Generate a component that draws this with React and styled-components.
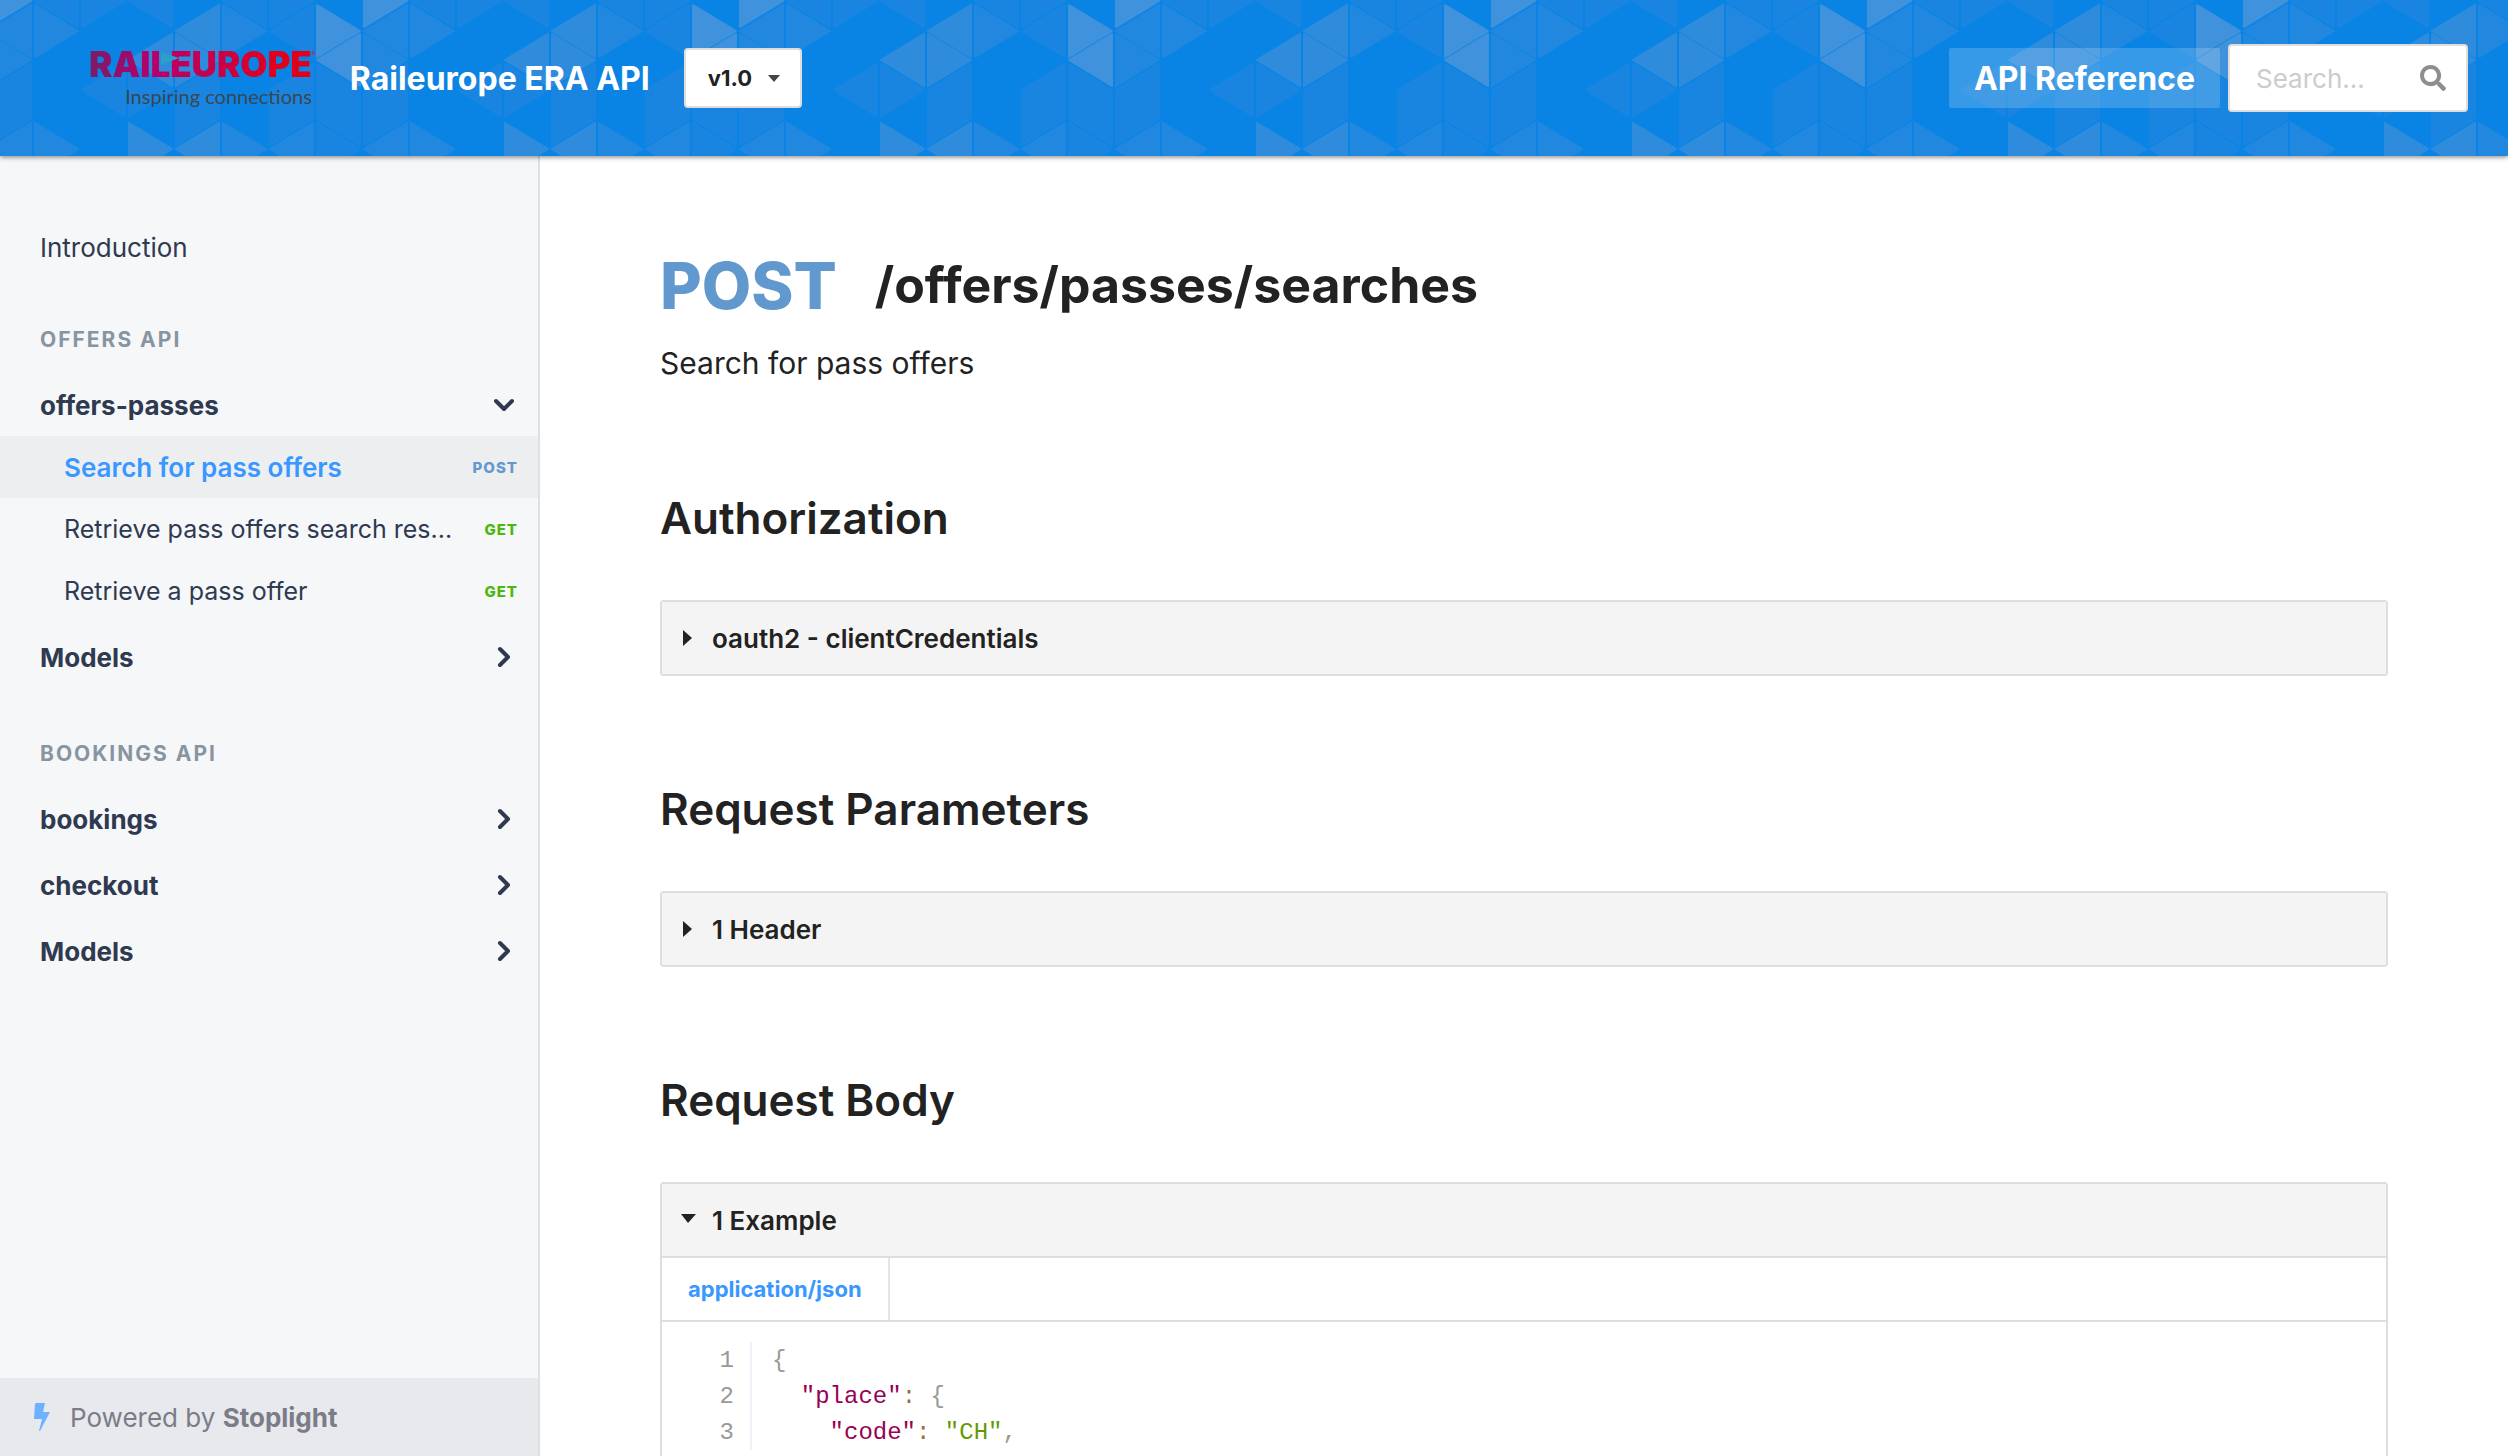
import React from "react";
import styled, { createGlobalStyle } from "styled-components";
import { FaSearch } from "react-icons/fa";

const Global = createGlobalStyle`
  *, *::before, *::after { box-sizing: border-box; }
  body { margin: 0; font-family: Inter, "Noto Sans", sans-serif; color: #222; background: #fff; }
  h1, h2, h3, p, ul, ol { margin: 0; padding: 0; }
  ul, ol { list-style: none; }
  a { color: inherit; text-decoration: none; }
  button, input, select { font-family: inherit; }
`;

const Page = styled.div`
  display: flex;
  flex-direction: column;
  height: 100vh;
  overflow: hidden;
`;

const Header = styled.header`
  position: relative;
  z-index: 1;
  display: flex;
  align-items: center;
  flex: none;
  height: 156px;
  padding: 0 40px 0 89px;
  background: #0a84e4;
  box-shadow: 0 1px 5px rgba(0, 0, 0, 0.5);
`;

const HeaderPattern = styled.svg`
  position: absolute;
  inset: 0;
  z-index: -1;
  width: 100%;
  height: 100%;
`;

const Logo = styled.a`
  position: relative;
  display: flex;
  flex-direction: column;
  align-items: flex-end;
`;

const LogoName = styled.span`
  font-size: 35px;
  line-height: 36px;
  font-weight: 900;
  color: transparent;
  background: linear-gradient(90deg, #7a1c68, #b5006b 28%, #c8004c 55%, #e2001a 85%);
  background-clip: text;
`;

const LogoArrow = styled.svg`
  position: absolute;
  top: 6px;
  left: 72px;
  width: 18px;
  height: 13px;
  fill: #2a9fc9;
`;

const LogoMark = styled.sup`
  position: absolute;
  top: 4px;
  left: 100%;
  font-size: 6px;
  line-height: 8px;
  color: #b02a4c;
`;

const LogoTagline = styled.span`
  font-family: Lato, sans-serif;
  font-size: 20px;
  line-height: 28px;
  color: #3c4650;
`;

const SiteTitle = styled.a`
  margin-left: 38px;
  font-size: 32px;
  font-weight: 700;
  color: #fff;
`;

const VersionPicker = styled.label`
  position: relative;
  margin-left: 34px;
`;

const VersionSelect = styled.select`
  appearance: none;
  display: block;
  width: 118px;
  height: 60px;
  padding: 0 22px;
  border: 2px solid #dedede;
  border-radius: 4px;
  background: #fff;
  color: #222;
  font-size: 22px;
  font-weight: 700;
`;

const VersionCaret = styled.svg`
  position: absolute;
  top: 27px;
  right: 22px;
  width: 12px;
  height: 7px;
  fill: #444;
`;

const HeaderNav = styled.nav`
  display: flex;
  align-items: center;
  gap: 8px;
  margin-left: auto;
`;

const HeaderLink = styled.a`
  display: flex;
  align-items: center;
  height: 60px;
  padding: 0 25px;
  border-radius: 2px;
  background: rgba(255, 255, 255, 0.18);
  color: #fff;
  font-size: 32px;
  font-weight: 700;
`;

const SearchBox = styled.label`
  display: flex;
  align-items: center;
  width: 240px;
  height: 68px;
  padding: 0 20px 0 26px;
  border: 2px solid #dedede;
  border-radius: 4px;
  background: #fff;
  color: #8e8e8e;
`;

const SearchInput = styled.input`
  flex: 1;
  min-width: 0;
  padding: 0;
  border: 0;
  outline: 0;
  background: none;
  font-size: 26px;
  &::placeholder { color: #ccc; opacity: 1; }
`;

const Body = styled.div`
  display: flex;
  flex: 1;
  min-height: 0;
`;

const Sidebar = styled.aside`
  display: flex;
  flex-direction: column;
  flex: none;
  width: 540px;
  border-right: 2px solid #dae1e7;
  background: #f6f7f9;
  color: #2f3a50;
  font-size: 26px;
`;

const SidebarNav = styled.nav`
  flex: 1;
  padding-top: 60px;
`;

const NavLink = styled.a`
  display: flex;
  align-items: center;
  height: 62px;
  padding: 0 40px;
`;

const NavHeading = styled.h3`
  padding: 46px 40px 14px;
  font-size: 21px;
  line-height: 32px;
  font-weight: 700;
  letter-spacing: 2px;
  color: #8795a1;
`;

const NavGroup = styled.ul`
  margin-bottom: 4px;
`;

const GroupToggle = styled.button`
  display: flex;
  align-items: center;
  justify-content: space-between;
  width: 100%;
  height: 62px;
  margin-top: 4px;
  padding: 0 23px 0 40px;
  border: 0;
  background: none;
  color: inherit;
  font-size: 26px;
  font-weight: 700;
`;

const Chevron = styled.svg`
  width: 22px;
  height: 22px;
  fill: none;
  stroke: currentColor;
  stroke-width: 4;
  stroke-linecap: round;
  stroke-linejoin: round;
  transform: ${(p) => (p.$open ? "rotate(90deg)" : "none")};
`;

const OperationLink = styled.a`
  display: flex;
  align-items: center;
  gap: 16px;
  height: 62px;
  padding: 0 20px 0 64px;
  background: ${(p) => (p.$active ? "#edeef0" : "none")};
  color: ${(p) => (p.$active ? "#3898ff" : "inherit")};
  font-size: ${(p) => (p.$active ? 26 : 25)}px;
  font-weight: ${(p) => (p.$active ? 600 : 400)};
`;

const OperationName = styled.span`
  flex: 1;
  overflow: hidden;
  white-space: nowrap;
  text-overflow: ellipsis;
`;

const methodColors = { POST: "#6199cf", GET: "#4cb80b" };

const MethodTag = styled.span`
  font-size: 15px;
  font-weight: 800;
  letter-spacing: 1px;
  color: ${(p) => methodColors[p.$method]};
`;

const PoweredBy = styled.a`
  display: flex;
  align-items: center;
  gap: 20px;
  height: 78px;
  padding: 0 34px;
  background: #e7e9ed;
  color: #7b7c88;
`;

const Bolt = styled.svg`
  width: 16px;
  height: 28px;
  fill: #6cb2ff;
`;

const Main = styled.main`
  flex: 1;
  min-width: 0;
  padding: 89px 120px 0;
  overflow-y: auto;
  scrollbar-width: none;
`;

const OperationTitle = styled.h1`
  display: flex;
  align-items: center;
  gap: 38px;
  height: 80px;
  font-size: 50px;
  font-weight: 700;
`;

const Method = styled.span`
  font-size: 64px;
  font-weight: 800;
  color: ${(p) => methodColors[p.$method]};
`;

const Summary = styled.p`
  margin-top: 18px;
  font-size: 30px;
  line-height: 40px;
`;

const Section = styled.section`
  margin-top: 104px;
  &:first-of-type { margin-top: 106px; }
`;

const SectionTitle = styled.h2`
  margin-bottom: 53px;
  font-size: 44px;
  line-height: 58px;
  font-weight: 600;
`;

const Panel = styled.div`
  border: 2px solid #dedede;
  border-radius: 4px;
`;

const PanelToggle = styled.button`
  display: flex;
  align-items: center;
  gap: 16px;
  width: 100%;
  height: 72px;
  padding: 0 18px;
  border: 0;
  background: #f4f4f4;
  color: #222;
  font-size: 26px;
  font-weight: 600;
`;

const Marker = styled.svg`
  width: 16px;
  height: 16px;
  fill: currentColor;
`;

const Tabs = styled.div`
  display: flex;
  height: 66px;
  border-top: 2px solid #dedede;
  border-bottom: 2px solid #dedede;
`;

const Tab = styled.button`
  padding: 0 26px;
  border: 0;
  border-right: 2px solid #e4e4e4;
  background: none;
  color: #3898ff;
  font-size: 22px;
  font-weight: 700;
`;

const Code = styled.ol`
  padding: 20px 0;
  font-family: "Liberation Mono", monospace;
  font-size: 24px;
  line-height: 36px;
  color: #999;
`;

const CodeLine = styled.li`
  display: flex;
  white-space: pre;
`;

const LineNumber = styled.span`
  width: 90px;
  padding: 2px 16px 0 0;
  border-right: 2px solid #eef3f9;
  text-align: right;
  line-height: 34px;
`;

const LineText = styled.code`
  padding: 2px 0 0 20px;
  font-family: inherit;
  line-height: 34px;
`;

const tokenColors = { key: "#905", operator: "#9a6e3a", string: "#690" };

const Token = styled.span`
  color: ${(p) => tokenColors[p.$kind]};
`;

/* Triangle grid: 8 columns of 47px. Boundaries with an even index have nodes at
   y = 1, 60, 119; odd ones at 31, 90, 149. Each entry is
   [column, apex direction, apex y, strength]. */
const COLUMN = 47;
const triangles = [
  [0, "l", 1, 1], [0, "r", 31, 2], [0, "r", 149, 2],
  [1, "r", 1, 1], [1, "l", 90, 1],
  [2, "l", 1, 1], [2, "l", 60, 3], [2, "r", 90, 1], [2, "r", 149, 3],
  [3, "l", 31, 3], [3, "r", 60, 3], [3, "l", 90, 1], [3, "r", 119, 1], [3, "l", 149, 3],
  [4, "l", 1, 1], [4, "r", 31, 2], [4, "r", 149, 2],
  [5, "r", 1, 1], [5, "l", 31, 1], [5, "l", 90, 1], [5, "r", 119, 1], [5, "l", 149, 2],
  [6, "r", 31, 4], [6, "l", 60, 4], [6, "r", 90, 1], [6, "l", 119, 1], [6, "r", 149, 1],
  [7, "r", 1, 4], [7, "l", 31, 2], [7, "r", 60, 2], [7, "l", 90, 1], [7, "r", 119, 1], [7, "l", 149, 2],
];
const strengths = ["", "#1985e0", "#2187df", "#2f8cdd", "#3f92db"];

function trianglePath([column, direction, y]) {
  const left = column * COLUMN + 2;
  const right = (column + 1) * COLUMN - 2;
  const [apex, base] = direction === "r" ? [right, left] : [left, right];
  return `M${apex} ${y}L${base} ${y - 26}V${y + 26}Z`;
}

function TrianglePattern() {
  return (
    <HeaderPattern aria-hidden="true">
      <defs>
        <pattern id="triangles" x="33" y="0" width={COLUMN * 8} height="160" patternUnits="userSpaceOnUse">
          {triangles.map((t) => (
            <path
              key={t.join()}
              d={trianglePath(t)}
              fill={strengths[t[3]]}
              stroke={strengths[t[3]]}
              strokeWidth="2"
              strokeLinejoin="round"
            />
          ))}
        </pattern>
      </defs>
      <rect width="100%" height="100%" fill="url(#triangles)" />
    </HeaderPattern>
  );
}

function Group({ name, open, children }) {
  return (
    <li>
      <GroupToggle type="button" aria-expanded={Boolean(open)}>
        {name}
        <Chevron viewBox="0 0 22 22" $open={open} aria-hidden="true">
          <path d="M7 3L15 11L7 19" />
        </Chevron>
      </GroupToggle>
      {children}
    </li>
  );
}

function Operation({ name, method, active }) {
  return (
    <OperationLink href="#" $active={active}>
      <OperationName>{name}</OperationName>
      <MethodTag $method={method}>{method}</MethodTag>
    </OperationLink>
  );
}

function Disclosure({ label, open, children }) {
  return (
    <Panel>
      <PanelToggle type="button" aria-expanded={Boolean(open)}>
        <Marker viewBox="0 0 16 16" aria-hidden="true">
          <path d={open ? "M1 2H16L8 11Z" : "M3 0V16L12 8Z"} />
        </Marker>
        {label}
      </PanelToggle>
      {children}
    </Panel>
  );
}

function Line({ number, children }) {
  return (
    <CodeLine>
      <LineNumber>{number}</LineNumber>
      <LineText>{children}</LineText>
    </CodeLine>
  );
}

export default function App() {
  return (
    <Page>
      <Global />
      <Header>
        <TrianglePattern />
        <Logo href="#">
          <LogoName>RAILEUROPE</LogoName>
          <LogoArrow viewBox="0 0 18 13" aria-hidden="true">
            <path d="M0 0L18 6L0 13Z" />
          </LogoArrow>
          <LogoMark>®</LogoMark>
          <LogoTagline>Inspiring connections</LogoTagline>
        </Logo>
        <SiteTitle href="#">Raileurope ERA API</SiteTitle>
        <VersionPicker>
          <VersionSelect aria-label="Version" defaultValue="v1.0">
            <option>v1.0</option>
          </VersionSelect>
          <VersionCaret viewBox="0 0 12 7" aria-hidden="true">
            <path d="M0 0H12L6 7Z" />
          </VersionCaret>
        </VersionPicker>
        <HeaderNav>
          <HeaderLink href="#">API Reference</HeaderLink>
          <SearchBox>
            <SearchInput type="search" aria-label="Search" placeholder="Search..." />
            <FaSearch size={26} aria-hidden="true" />
          </SearchBox>
        </HeaderNav>
      </Header>
      <Body>
        <Sidebar>
          <SidebarNav>
            <NavLink href="#">Introduction</NavLink>
            <NavHeading>OFFERS API</NavHeading>
            <NavGroup>
              <Group name="offers-passes" open>
                <Operation name="Search for pass offers" method="POST" active />
                <Operation name="Retrieve pass offers search res..." method="GET" />
                <Operation name="Retrieve a pass offer" method="GET" />
              </Group>
              <Group name="Models" />
            </NavGroup>
            <NavHeading>BOOKINGS API</NavHeading>
            <NavGroup>
              <Group name="bookings" />
              <Group name="checkout" />
              <Group name="Models" />
            </NavGroup>
          </SidebarNav>
          <PoweredBy href="#">
            <Bolt viewBox="0 0 16 28" aria-hidden="true">
              <path d="M2 0H11L9 9H16L6 28L5 28L8 16H0L1 1Z" />
            </Bolt>
            <span>
              Powered by <b>Stoplight</b>
            </span>
          </PoweredBy>
        </Sidebar>
        <Main>
          <OperationTitle>
            <Method $method="POST">POST</Method>
            /offers/passes/searches
          </OperationTitle>
          <Summary>Search for pass offers</Summary>
          <Section>
            <SectionTitle>Authorization</SectionTitle>
            <Disclosure label="oauth2 - clientCredentials" />
          </Section>
          <Section>
            <SectionTitle>Request Parameters</SectionTitle>
            <Disclosure label="1 Header" />
          </Section>
          <Section>
            <SectionTitle>Request Body</SectionTitle>
            <Disclosure label="1 Example" open>
              <Tabs role="tablist">
                <Tab type="button" role="tab" aria-selected="true">application/json</Tab>
              </Tabs>
              <Code>
                <Line number={1}>{"{"}</Line>
                <Line number={2}>
                  {"  "}
                  <Token $kind="key">"place"</Token>
                  <Token $kind="operator">:</Token>
                  {" {"}
                </Line>
                <Line number={3}>
                  {"    "}
                  <Token $kind="key">"code"</Token>
                  <Token $kind="operator">:</Token>{" "}
                  <Token $kind="string">"CH"</Token>,
                </Line>
              </Code>
            </Disclosure>
          </Section>
        </Main>
      </Body>
    </Page>
  );
}
